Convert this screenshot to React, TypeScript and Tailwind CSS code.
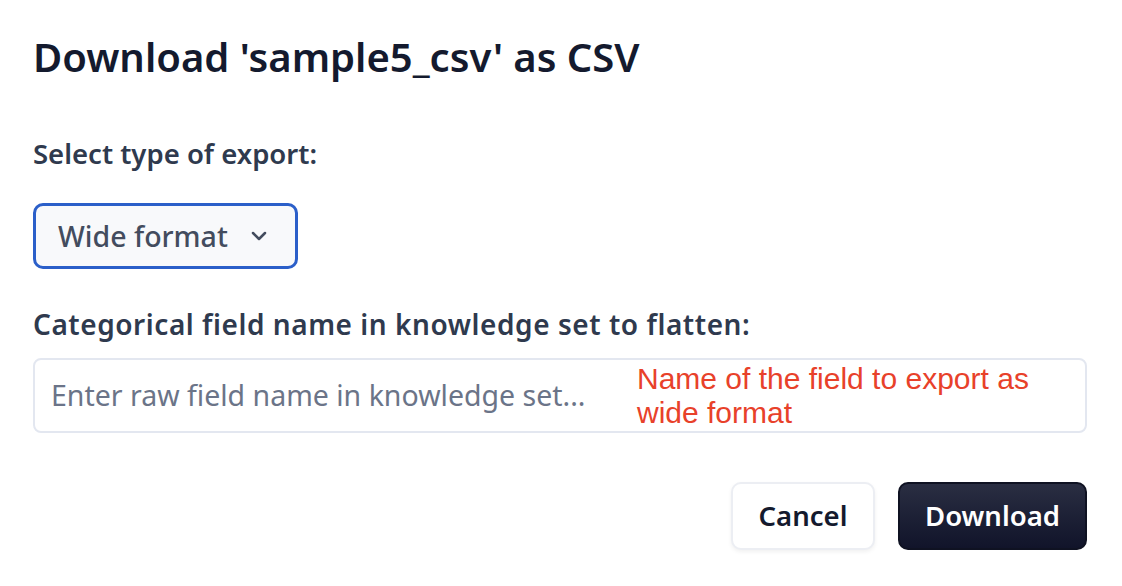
import React from "react";

export default function App() {
  return (
    <div
      className="w-[1122px] h-[586px] bg-white overflow-hidden"
      style={{ fontFamily: '"Noto Sans", sans-serif' }}
    >
      <div className="pl-[33px] pr-[35px] pt-[32px]">
        <h1 className="text-[40px] leading-[50px] font-semibold text-[#141a2e]">
          Download 'sample5_csv' as CSV
        </h1>
        <div className="mt-[55px] text-[27.5px] leading-[34px] font-semibold text-[#2f3a4e]">
          Select type of export:
        </div>
        <div className="mt-[32px]">
          <button className="flex items-center h-[66px] w-[265px] rounded-[10px] border-[3px] border-[#2b5fc9] bg-[#f8f9fb] pl-[22px] pr-[24px] text-[28.5px] font-medium text-[#434c5e]">
            <span>Wide format</span>
            <svg
              className="ml-auto"
              width="24"
              height="24"
              viewBox="0 0 24 24"
              fill="none"
              stroke="#434c5e"
              strokeWidth="2.5"
              strokeLinecap="round"
              strokeLinejoin="round"
            >
              <path d="M6 9l6 6 6-6" />
            </svg>
          </button>
        </div>
        <div className="mt-[38px] text-[28px] leading-[34px] font-semibold tracking-[0.55px] text-[#2f3a4e]">
          Categorical field name in knowledge set to flatten:
        </div>
        <div className="mt-[17px] relative h-[75px] w-[1054px] rounded-[8px] border-2 border-[#e3e7f0] bg-white flex items-center pl-[16px]">
          <span className="text-[28.5px] text-[#6b7488]">
            Enter raw field name in knowledge set...
          </span>
          <div
            className="absolute left-[602px] top-[2px] text-[30px] leading-[34px] text-[#e8412a]"
            style={{ fontFamily: '"Liberation Sans", Arial, sans-serif' }}
          >
            Name of the field to export as
            <br />
            wide format
          </div>
        </div>
        <div className="mt-[49px] flex justify-end gap-[23px] w-[1054px]">
          <button className="h-[68px] w-[144px] rounded-[10px] border-2 border-[#eceef3] bg-white text-[27.5px] font-semibold text-[#141a2e] shadow-[0_2px_4px_rgba(0,0,0,0.06)]">
            Cancel
          </button>
          <button className="h-[68px] w-[189px] rounded-[10px] border-2 border-[#0f1222] bg-gradient-to-b from-[#2a2e42] to-[#11142a] text-[27.5px] font-semibold text-white">
            Download
          </button>
        </div>
      </div>
    </div>
  );
}
